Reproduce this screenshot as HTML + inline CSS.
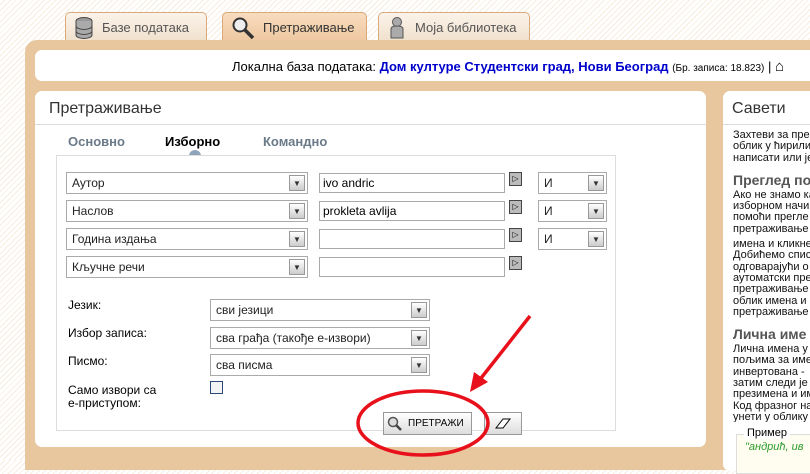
<!DOCTYPE html>
<html><head><meta charset="utf-8"><style>
*{box-sizing:border-box;margin:0;padding:0}
body{width:810px;height:460px;overflow:hidden;position:relative;font-family:"Liberation Sans","DejaVu Sans",sans-serif;font-size:12px;color:#000;
background:repeating-linear-gradient(135deg,#fff 0 3px,#f6ece0 3px 4px)}
.a{position:absolute}
.tab{position:absolute;top:12px;height:30px;border:1px solid #d9a979;border-bottom:none;border-radius:5px 5px 0 0;background:linear-gradient(#fbf3ea,#f0e0cc);font-size:13px;color:#555;display:flex;align-items:center;padding-left:8px;gap:8px}
.tab.act{background:linear-gradient(#f8dcbf,#eec79f);color:#333}
.tan{position:absolute;left:25px;top:40px;width:800px;height:430px;background:#e8c79e;border-radius:12px 0 0 0}
.white{background:#fff;border-radius:7px}
.sel{position:absolute;height:22px;border:1px solid #aaa;background:#fff;font-size:12px;padding:3px 5px;color:#222}
.sel i{position:absolute;right:2px;top:2px;width:16px;height:16px;border:1px solid #999;background:linear-gradient(#fff,#ccc);font-style:normal;font-size:8px;text-align:center;line-height:15px;color:#333}
.inp{position:absolute;height:20px;border:1px solid #aaa;background:#fff;padding:2px 3px;font-size:12px}
.flag{position:absolute;width:13px;height:14px;border:1px solid #444;background:#bbb;font-size:8px;line-height:12px;text-align:center}
.side{font-size:11px;line-height:11.3px;color:#111}
.side h4{font-size:14px;line-height:16px;color:#555;margin:8px 0 2px;font-weight:bold;white-space:nowrap}
</style></head><body>
<div class="tab" style="left:65px;width:142px"><svg width="20" height="24"><ellipse cx="10" cy="5" rx="8" ry="3.5" fill="#999" stroke="#444"/><path d="M2 5v14a8 3.5 0 0 0 16 0V5" fill="#aaa" stroke="#444"/><path d="M2 10a8 3.5 0 0 0 16 0M2 15a8 3.5 0 0 0 16 0" fill="none" stroke="#444"/></svg>Базе података</div>
<div class="tab act" style="left:222px;width:145px"><svg width="24" height="24"><circle cx="9" cy="9" r="6.5" fill="#eee" stroke="#333" stroke-width="2"/><path d="M14 14l8 8" stroke="#333" stroke-width="3.5"/></svg><b style="font-weight:normal">Претраживање</b></div>
<div class="tab" style="left:378px;width:152px"><svg width="20" height="24"><circle cx="10" cy="6" r="4.5" fill="#aaa" stroke="#555"/><path d="M4 22V13q0-3 6-3t6 3v9z" fill="#aaa" stroke="#555"/></svg>Моја библиотека</div>
<div class="tan"></div>
<div class="a white" style="left:35px;top:50px;width:790px;height:31px"></div>
<div class="a" style="left:232px;top:58px;font-size:13px;white-space:nowrap">Локална база података: <b style="color:#0000cc">Дом културе Студентски град, Нови Београд</b> <span style="font-size:10px">(Бр. записа: 18.823)</span> | <span style="font-size:15px">⌂</span></div>
<div class="a white" style="left:35px;top:91px;width:671px;height:356px"></div>
<div class="a" style="left:49px;top:100px;font-size:16px;color:#333">Претраживање</div>
<div class="a" style="left:35px;top:124px;width:671px;height:1px;background:#ddd"></div>
<div class="a" style="left:68px;top:134px;font-size:13px;font-weight:bold;color:#6a7a88">Основно</div>
<div class="a" style="left:165px;top:134px;font-size:13px;font-weight:bold;color:#000">Изборно</div>
<div class="a" style="left:263px;top:134px;font-size:13px;font-weight:bold;color:#6a7a88">Командно</div>
<div class="a" style="left:189px;top:150px;width:12px;height:6px;background:#8fa4b8;border-radius:6px 6px 0 0"></div>
<div class="a" style="left:56px;top:155px;width:560px;height:276px;border:1px solid #ddd"></div>
<div class="sel" style="left:66px;top:172px;width:242px">Аутор<i>▼</i></div>
<div class="sel" style="left:66px;top:200px;width:242px">Наслов<i>▼</i></div>
<div class="sel" style="left:66px;top:228px;width:242px">Година издања<i>▼</i></div>
<div class="sel" style="left:66px;top:256px;width:242px">Кључне речи<i>▼</i></div>
<div class="inp" style="left:319px;top:173px;width:186px">ivo andric</div>
<div class="inp" style="left:319px;top:201px;width:186px">prokleta avlija</div>
<div class="inp" style="left:319px;top:229px;width:186px"></div>
<div class="inp" style="left:319px;top:257px;width:186px"></div>
<div class="flag" style="left:509px;top:172px">▷</div>
<div class="flag" style="left:509px;top:200px">▷</div>
<div class="flag" style="left:509px;top:228px">▷</div>
<div class="flag" style="left:509px;top:256px">▷</div>
<div class="sel" style="left:538px;top:172px;width:69px">И<i>▼</i></div>
<div class="sel" style="left:538px;top:200px;width:69px">И<i>▼</i></div>
<div class="sel" style="left:538px;top:228px;width:69px">И<i>▼</i></div>
<div class="a" style="left:68px;top:298px">Језик:</div>
<div class="a" style="left:68px;top:326px">Избор записа:</div>
<div class="a" style="left:68px;top:354px">Писмо:</div>
<div class="a" style="left:68px;top:384px;line-height:13px">Само извори са<br>е-приступом:</div>
<div class="sel" style="left:210px;top:299px;width:220px">сви језици<i>▼</i></div>
<div class="sel" style="left:210px;top:327px;width:220px">сва грађа (такође е-извори)<i>▼</i></div>
<div class="sel" style="left:210px;top:354px;width:220px">сва писма<i>▼</i></div>
<div class="a" style="left:210px;top:381px;width:13px;height:13px;border:1px solid #2a4a7a;background:#f4f4f4"></div>
<div class="a" style="left:383px;top:412px;width:89px;height:23px;border:1px solid #999;background:linear-gradient(#fff,#ddd);font-size:10px;padding:5px 0 0 24px">ПРЕТРАЖИ</div>
<svg class="a" style="left:386px;top:415px" width="18" height="18"><circle cx="7" cy="7" r="4.5" fill="#ddd" stroke="#555" stroke-width="1.5"/><path d="M10 10l5 5" stroke="#444" stroke-width="2.5"/></svg>
<div class="a" style="left:484px;top:412px;width:38px;height:23px;border:1px solid #999;background:linear-gradient(#fff,#ddd)"></div>
<svg class="a" style="left:494px;top:416px" width="18" height="14"><path d="M2 12l7-9h7l-7 9z" fill="#fff" stroke="#000"/></svg>
<svg class="a" style="left:0;top:0" width="810" height="460"><ellipse cx="423" cy="423" rx="65" ry="32" fill="none" stroke="#e8101a" stroke-width="3.5"/><path d="M530 316L478 382" stroke="#e8101a" stroke-width="3.5"/><path d="M470 392l4-20l14 10z" fill="#e8101a"/></svg>
<div class="a white" style="left:723px;top:91px;width:100px;height:380px"></div>
<div class="a" style="left:732px;top:100px;font-size:16px;color:#333">Савети</div>
<div class="a" style="left:723px;top:124px;width:100px;height:1px;background:#ddd"></div>
<div class="a side" style="left:733px;top:130px;width:80px;height:292px;overflow:hidden;white-space:nowrap">Захтеви за пре<br>облик у ћирили<br>написати или је
<h4>Преглед по</h4>Ако не знамо ка<br>изборном начин<br>помоћи прегле<br>претраживање<div style="height:4px"></div>имена и кликне<br>Добићемо спис<br>одговарајући о<br>аутоматски пре<br>претраживање<br>облик имена и р<br>претраживање
<h4>Лична име</h4>Лична имена у<br>пољима за име<br>инвертована -<br>затим следи је<br>презимена и им<br>Код фразног на<br>унети у облику</div>
<div class="a" style="left:736px;top:434px;width:80px;height:40px;border:1px solid #ddd;background:#fffdf0"></div>
<div class="a" style="left:744px;top:427px;font-size:11px;background:#fff;padding:0 3px">Пример</div>
<div class="a" style="left:745px;top:441px;font-size:11px;color:#2a9a2a;font-style:italic;white-space:nowrap">"андрић, ив</div>
</body></html>
